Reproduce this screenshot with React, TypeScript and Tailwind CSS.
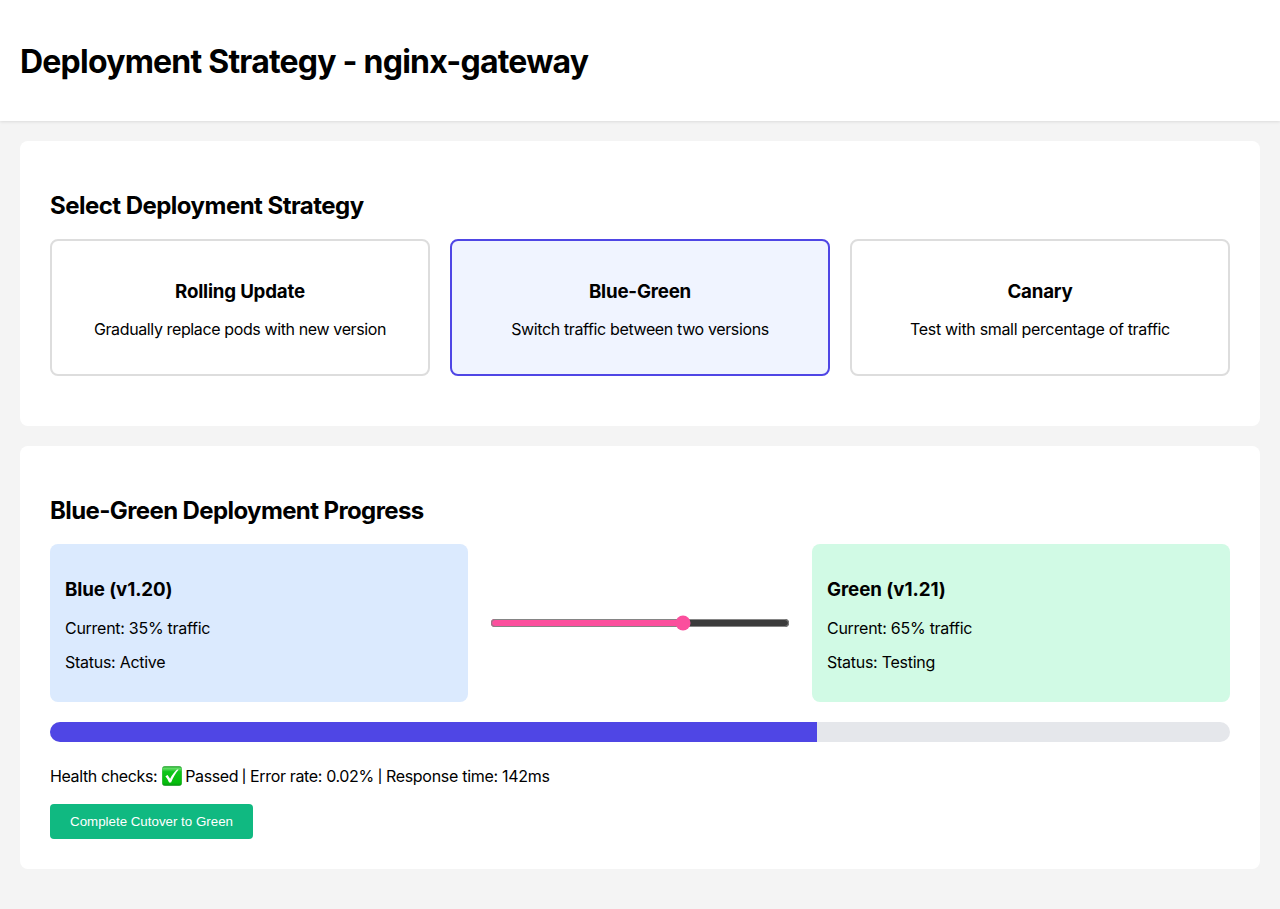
import React from 'react';

const strategies = [
  { name: 'Rolling Update', text: 'Gradually replace pods with new version', spacing: 'tracking-[-0.38px]' },
  { name: 'Blue-Green', text: 'Switch traffic between two versions', spacing: 'tracking-[-0.37px]', active: true },
  { name: 'Canary', text: 'Test with small percentage of traffic', spacing: 'tracking-[-0.32px]' },
];

function Check() {
  return (
    <svg viewBox="0 0 20 20" className="mr-[3.5px] ml-[4.5px] size-5 shrink-0" role="img" aria-label="Passed">
      <defs>
        <linearGradient id="tile" x1="0" y1="0" x2="0" y2="1">
          <stop offset="0" stopColor="#22a52e" />
          <stop offset="0.12" stopColor="#5fdc63" />
          <stop offset="0.28" stopColor="#0fc51b" />
          <stop offset="0.85" stopColor="#05bd0b" />
          <stop offset="1" stopColor="#079413" />
        </linearGradient>
      </defs>
      <rect x="0.2" y="0.2" width="19.6" height="19.6" rx="3" fill="url(#tile)" stroke="#169a22" strokeWidth="0.4" />
      <path d="M3.4 10.3 L5.6 9.1 L8.1 12.7 C10 8.9 12.3 6 15 3.4 L16.7 3.6 C13.3 7.5 11 11.7 9.1 16.6 L7.1 16.6 C6.2 14.2 5 12.1 3.4 10.3Z" fill="white" />
    </svg>
  );
}

function Separator() {
  return <span className="flex w-3 justify-center text-[13px] font-medium">|</span>;
}

export default function App() {
  return (
    <div className="min-h-[909px] bg-[#f4f4f4] font-['Inter',sans-serif] text-base leading-[18px] text-black">
      <header className="h-[121px] bg-white px-5 pt-[43px] shadow-[0_1px_3px_rgba(0,0,0,0.1)]">
        <h1 className="text-[32px] leading-[38px] font-bold tracking-[-0.78px]">Deployment Strategy - nginx-gateway</h1>
      </header>
      <main className="px-5 pt-5 pb-10">
        <section className="h-[285px] rounded-lg bg-white px-[30px] pt-[51px]">
          <h2 className="text-2xl leading-[28px] font-bold tracking-[-0.53px]">Select Deployment Strategy</h2>
          <div className="mt-[19px] grid grid-cols-3 gap-5">
            {strategies.map((s) => (
              <div key={s.name} className={`h-[137px] rounded-lg border-2 pt-10 text-center ${s.active ? 'border-[#4f46e5] bg-[#f0f4ff]' : 'border-[#dddddd]'}`}>
                <h3 className="text-[18.72px] leading-[22px] font-bold tracking-[-0.2px]">{s.name}</h3>
                <p className={`mt-[17px] ${s.spacing}`}>{s.text}</p>
              </div>
            ))}
          </div>
        </section>
        <section className="mt-5 h-[423px] rounded-lg bg-white px-[30px] pt-[51px]">
          <h2 className="text-2xl leading-[28px] font-bold tracking-[-0.61px]">Blue-Green Deployment Progress</h2>
          <div className="mt-[19px] flex items-center justify-between">
            <div className="h-[158px] w-[418px] rounded-lg bg-[#dbeafe] px-[15px] pt-[35px] tracking-[-0.27px]">
              <h3 className="text-[18.72px] leading-[22px] font-bold tracking-[-0.1px]">Blue (v1.20)</h3>
              <p className="mt-[18px]">Current: 35% traffic</p>
              <p className="mt-4">Status: Active</p>
            </div>
            <input type="range" defaultValue={65} className="w-[300px] accent-[#fb4f9d]" />
            <div className="h-[158px] w-[418px] rounded-lg bg-[#d1fae5] px-[15px] pt-[35px] tracking-[-0.27px]">
              <h3 className="text-[18.72px] leading-[22px] font-bold tracking-[-0.04px]">Green (v1.21)</h3>
              <p className="mt-[18px]">Current: 65% traffic</p>
              <p className="mt-4">Status: Testing</p>
            </div>
          </div>
          <div className="mt-5 h-5 overflow-hidden rounded-[10px] bg-[#e5e7eb]"><div className="h-full w-[65%] bg-[#4f46e5]" /></div>
          <p className="mt-6 flex h-5 items-center whitespace-nowrap">
            <span className="tracking-[-0.38px]">Health checks:</span>
            <Check />
            <span className="tracking-[-0.4px]">Passed</span>
            <Separator />
            <span className="tracking-[-0.35px]">Error rate: 0.02%</span>
            <Separator />
            <span className="tracking-[-0.29px]">Response time: 142ms</span>
          </p>
          <button className="mt-[18px] h-[35px] w-[203px] rounded bg-[#10b981] font-['Liberation_Sans',Arial,sans-serif] text-[13.333px] text-white">Complete Cutover to Green</button>
        </section>
      </main>
    </div>
  );
}
